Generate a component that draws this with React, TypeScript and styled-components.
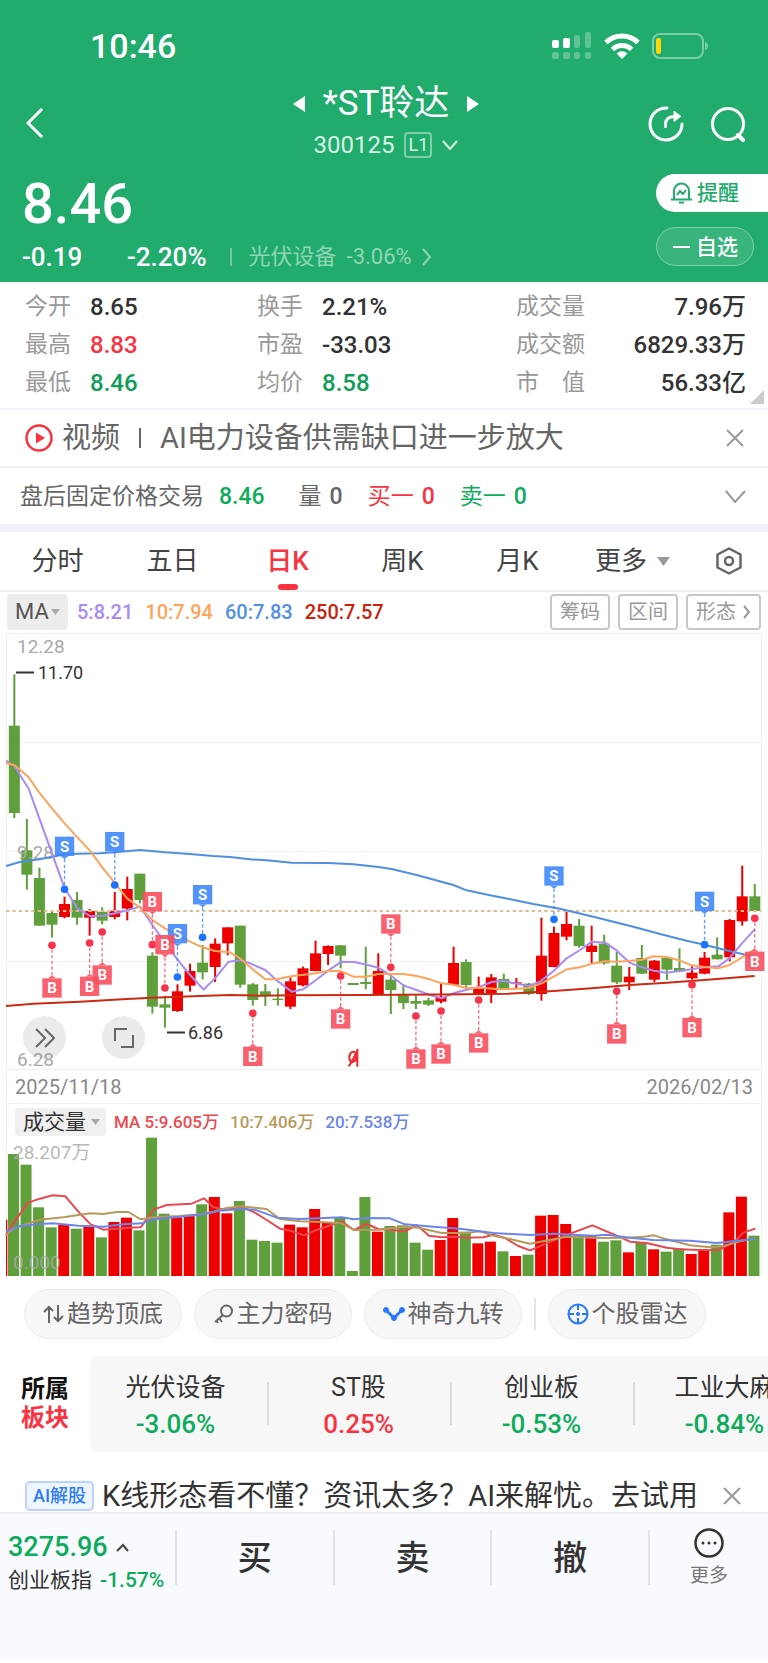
import React from "react";
import styled, { createGlobalStyle } from "styled-components";

const UP = "#f9333f";
const DOWN = "#0dab5c";
const FONT = `Roboto, "Noto Sans CJK SC", sans-serif`;

const Global = createGlobalStyle`
  * { box-sizing: border-box; }
  body { margin: 0; background: #fff; color: #333; font-family: ${FONT}; }
  button { font: inherit; color: inherit; border: 0; background: none; padding: 0; margin: 0; cursor: pointer; }
  a { color: inherit; text-decoration: none; }
  svg { display: block; flex: none; }
  h1, p, dl, dd, dt { margin: 0; font-weight: inherit; }
`;

const Page = styled.div`
  width: 100%;
  overflow: hidden;
`;

/* ---------- header ---------- */

const Header = styled.header`
  background: #21ab6d;
  color: #fff;
  padding: 28px 0 10px;
`;

const StatusBar = styled.div`
  display: flex;
  align-items: center;
  justify-content: space-between;
  padding: 0 59px 0 90px;
  font-size: 34px;
  font-weight: 500;
  line-height: 36px;
`;

const StatusIcons = styled.div`
  display: flex;
  align-items: center;
  gap: 12px;
`;

const NavBar = styled.nav`
  display: grid;
  grid-template-columns: 1fr auto 1fr;
  align-items: center;
  padding: 16px 22px 0 26px;
`;

const NavActions = styled.div`
  display: flex;
  justify-content: flex-end;
  align-items: center;
  gap: 26px;
  padding-top: 6px;
`;

const NavBack = styled.div`
  padding-top: 8px;
`;

const TitleBlock = styled.div`
  display: flex;
  flex-direction: column;
  align-items: center;
  gap: 2px;
  padding-top: 2px;
`;

const TitleLine = styled.div`
  display: flex;
  align-items: center;
  gap: 18px;
`;

const Title = styled.h1`
  font-size: 35px;
  line-height: 44px;
`;

const CodeLine = styled.div`
  display: flex;
  align-items: center;
  gap: 10px;
  font-size: 24px;
  line-height: 34px;
  color: #d8f2e6;
`;

const LevelTag = styled.span`
  border: 2px solid #7fcfaa;
  border-radius: 4px;
  width: 28px;
  line-height: 22px;
  text-align: center;
  font-size: 18px;
`;

const Quote = styled.section`
  display: flex;
  justify-content: space-between;
  margin-top: 12px;
  padding-left: 22px;
`;

const Price = styled.p`
  font-size: 56px;
  font-weight: 500;
  line-height: 60px;
`;

const ChangeLine = styled.div`
  display: flex;
  align-items: center;
  margin-top: 8px;
  font-size: 26px;
  font-weight: 500;
  line-height: 30px;
`;

const Change = styled.span`
  min-width: 105px;
`;

const HeadRule = styled.i`
  width: 2px;
  height: 18px;
  margin: 0 17px 0 23px;
  background: #6fc8a0;
`;

const SectorLink = styled.a`
  display: flex;
  align-items: center;
  gap: 10px;
  font-size: 22px;
  font-weight: 400;
  color: #8fd6b4;
`;

const QuoteActions = styled.div`
  display: flex;
  flex-direction: column;
  gap: 15px;
`;

const Remind = styled.button`
  display: flex;
  align-items: center;
  gap: 5px;
  width: 112px;
  height: 38px;
  padding-left: 15px;
  border-radius: 20px 0 0 20px;
  background: #fff;
  color: #21ab6d;
  font-size: 21px;
  font-weight: 500;
  line-height: 30px;
`;

const Favorite = styled.button`
  display: flex;
  align-items: center;
  gap: 6px;
  width: 98px;
  height: 39px;
  padding-left: 16px;
  border: 1px solid #7fcfaa;
  border-radius: 20px;
  background: #39b47d;
  color: #fff;
  font-size: 21px;
  font-weight: 500;
  line-height: 30px;
`;

/* ---------- figures and notices ---------- */

const Stats = styled.dl`
  position: relative;
  display: grid;
  grid-template-columns: 232px 1fr 230px;
  padding: 6px 22px 6px 25px;
  border-bottom: 2px solid #f2f3f6;
`;

const Stat = styled.div<{ $spread?: boolean }>`
  display: flex;
  justify-content: ${(p) => (p.$spread ? "space-between" : "flex-start")};
  gap: 19px;
  line-height: 38px;
`;

const StatLabel = styled.dt`
  font-size: 23px;
  color: #999;
  white-space: pre;
`;

const StatValue = styled.dd<{ $color?: string }>`
  font-size: 24px;
  font-weight: 500;
  color: ${(p) => p.$color || "#333"};
`;

const Corner = styled.i`
  position: absolute;
  right: 4px;
  bottom: 4px;
  border-style: solid;
  border-width: 0 0 14px 14px;
  border-color: transparent transparent #ccc transparent;
`;

const Notice = styled.section`
  display: flex;
  align-items: center;
  justify-content: space-between;
  padding: 10px 24px 10px 25px;
  border-bottom: 2px solid #f2f3f6;
`;

const NoticeLink = styled.a`
  display: flex;
  align-items: center;
  gap: 9px;
  font-size: 29px;
  line-height: 36px;
  color: #666;
  white-space: pre;
`;

const NoticeRule = styled.i`
  width: 2px;
  height: 20px;
  margin: 0 10px;
  background: #666;
`;

const AfterHours = styled.section`
  display: flex;
  align-items: center;
  padding: 11px 22px 9px 20px;
  font-size: 23px;
  line-height: 36px;
  color: #666;
  border-bottom: 8px solid #f1f2f7;
`;

const Field = styled.span<{ $color?: string; $gap: number }>`
  display: flex;
  gap: 8px;
  margin-left: ${(p) => p.$gap}px;
  color: ${(p) => p.$color || "#666"};
  b { font-weight: 500; }
`;

const EndButton = styled.button`
  margin-left: auto;
`;

/* ---------- period tabs ---------- */

const Tabs = styled.nav`
  display: flex;
  border-bottom: 2px solid #f0f0f1;
`;

const Tab = styled.button<{ $active?: boolean; $narrow?: boolean }>`
  position: relative;
  display: flex;
  align-items: center;
  justify-content: center;
  flex: ${(p) => (p.$narrow ? 78 : 115)} 1 0;
  gap: 10px;
  font-size: 26px;
  line-height: 58px;
  color: ${(p) => (p.$active ? UP : "#444")};
  font-weight: ${(p) => (p.$active ? 500 : 400)};
  &::after {
    content: "";
    display: ${(p) => (p.$active ? "block" : "none")};
    position: absolute;
    left: 50%;
    bottom: 0;
    width: 20px;
    height: 6px;
    margin-left: -10px;
    border-radius: 3px;
    background: ${UP};
  }
`;

/* ---------- chart ---------- */

const MaRow = styled.div`
  display: flex;
  align-items: center;
  gap: 9px;
  padding: 2px 7px 3px;
  font-size: 20px;
  line-height: 36px;
`;

const MaPicker = styled.button`
  display: flex;
  align-items: center;
  justify-content: center;
  gap: 2px;
  width: 61px;
  height: 36px;
  border-radius: 4px;
  background: #ededed;
  color: #555;
  font-size: 22px;
`;

const MaValue = styled.span<{ $color: string }>`
  color: ${(p) => p.$color};
  font-weight: 500;
  margin-right: 3px;
`;

const ToolGroup = styled.div`
  display: flex;
  gap: 8px;
  margin-left: auto;
`;

const ToolButton = styled.button`
  display: flex;
  align-items: center;
  gap: 7px;
  height: 36px;
  padding: 0 8px;
  border: 2px solid #c8c8c8;
  border-radius: 4px;
  color: #999;
  font-size: 20px;
`;

const ChartArea = styled.div`
  position: relative;
  svg.plot { width: 100%; height: auto; }
`;

const ChartButtons = styled.div`
  position: absolute;
  left: 23px;
  bottom: 11px;
  display: flex;
  gap: 36px;
`;

const RoundButton = styled.button`
  display: flex;
  align-items: center;
  justify-content: center;
  width: 43px;
  height: 43px;
  border-radius: 50%;
  background: rgba(120, 120, 120, 0.15);
`;

const DateRow = styled.div`
  display: flex;
  justify-content: space-between;
  margin: 0 6px;
  padding: 1px 8px 0;
  border: 1px solid #f0f0f0;
  border-top: 0;
  font-size: 20px;
  line-height: 32px;
  color: #888;
`;

const VolumeHead = styled.div`
  display: flex;
  align-items: center;
  gap: 8px;
  margin: 0 6px;
  padding: 4px 8px 1px;
  border-left: 1px solid #f0f0f0;
  border-right: 1px solid #f0f0f0;
  font-size: 17px;
  line-height: 28px;
`;

const VolumePicker = styled.button`
  display: flex;
  align-items: center;
  gap: 5px;
  padding: 0 6px 0 8px;
  border-radius: 4px;
  background: #f0f0f0;
  color: #333;
  font-size: 21px;
`;

/* ---------- below the chart ---------- */

const PillRow = styled.div`
  display: flex;
  align-items: center;
  gap: 12px;
  padding: 13px 24px 17px;
`;

const Pill = styled.button`
  display: flex;
  align-items: center;
  justify-content: center;
  gap: 3px;
  width: 158px;
  height: 50px;
  border: 1px solid #ececec;
  border-radius: 25px;
  background: #f7f7f7;
  color: #666;
  font-size: 24px;
  line-height: 36px;
`;

const PillRule = styled.i`
  width: 2px;
  height: 32px;
  background: #e6e6e6;
`;

const Sectors = styled.section`
  display: flex;
  align-items: center;
`;

const SectorsTitle = styled.div`
  flex: none;
  width: 90px;
  padding-left: 21px;
  font-size: 24px;
  font-weight: 700;
  line-height: 29px;
  color: #111;
  em { display: block; font-style: normal; color: ${UP}; }
`;

const SectorStrip = styled.div`
  display: flex;
  flex: 1;
  overflow: hidden;
  padding: 13px 0 9px;
  border-radius: 8px 0 0 8px;
  background: #f7f7f7;
  & > * + *::before {
    content: "";
    position: absolute;
    left: -6px;
    top: 13px;
    width: 2px;
    height: 43px;
    background: #dcdcdc;
  }
`;

const Sector = styled.a`
  position: relative;
  flex: none;
  width: 183px;
  padding-right: 12px;
  display: flex;
  flex-direction: column;
  align-items: center;
  font-size: 25px;
  line-height: 37px;
  color: #333;
`;

const Percent = styled.span<{ $color: string }>`
  font-size: 26px;
  font-weight: 500;
  color: ${(p) => p.$color};
`;

const AiRow = styled.section`
  display: flex;
  align-items: center;
  justify-content: space-between;
  height: 60px;
  padding: 28px 27px 0 25px;
`;

const AiLink = styled.a`
  display: flex;
  align-items: center;
  gap: 8px;
  font-size: 29px;
  line-height: 34px;
  white-space: nowrap;
`;

const AiTag = styled.span`
  padding: 0 6px;
  border: 2px solid #bcd4fb;
  border-radius: 5px;
  background: #eff5ff;
  color: #2e7bf6;
  font-size: 18px;
  font-weight: 500;
  line-height: 26px;
`;

const BottomBar = styled.footer`
  display: flex;
  padding: 16px 0 64px;
  border-top: 2px solid #eeeff2;
  background: #f9fafd;
`;

const IndexLink = styled.a`
  display: flex;
  flex-direction: column;
  width: 175px;
  padding-left: 8px;
  font-size: 21px;
  line-height: 32px;
  white-space: nowrap;
`;

const IndexValue = styled.span`
  display: flex;
  align-items: center;
  gap: 8px;
  color: ${DOWN};
  font-size: 27px;
  font-weight: 500;
  line-height: 34px;
`;

const IndexChange = styled.span`
  margin-left: 8px;
  color: ${DOWN};
  font-weight: 500;
`;

const Trade = styled.button`
  flex: 1;
  height: 55px;
  border-left: 2px solid #e2e3e6;
  font-size: 34px;
  font-weight: 500;
  line-height: 52px;
`;

const More = styled.button`
  display: flex;
  flex-direction: column;
  align-items: center;
  justify-content: center;
  gap: 7px;
  width: 120px;
  height: 55px;
  border-left: 2px solid #e2e3e6;
  color: #777;
  font-size: 19px;
  line-height: 22px;
`;

/* ---------- data (plot units are thirds of a pixel) ---------- */

type Candle = [number, number, number, number, "r" | "g", number];

// high, body top, body bottom, low, colour, volume top
const CANDLES: Candle[] = [
  [133, 287, 549, 564, "g", 252], [567, 661, 734, 779, "g", 284], [713, 744, 887, 887, "g", 412],
  [845, 849, 884, 923, "g", 472], [800, 822, 861, 865, "r", 465], [786, 810, 863, 884, "g", 476],
  [837, 843, 863, 917, "r", 471], [832, 845, 872, 883, "g", 502], [786, 842, 861, 868, "r", 456],
  [740, 777, 836, 871, "r", 443], [731, 731, 810, 820, "g", 481], [967, 977, 1130, 1151, "g", 203],
  [1097, 1123, 1133, 1193, "g", 431], [1063, 1084, 1143, 1146, "r", 442], [1001, 1023, 1067, 1085, "r", 438],
  [945, 998, 1027, 1048, "g", 403], [925, 941, 1011, 1056, "r", 381], [892, 892, 940, 976, "r", 430],
  [887, 887, 1064, 1073, "g", 393], [1059, 1063, 1110, 1127, "g", 509], [1062, 1084, 1097, 1128, "g", 513],
  [1075, 1106, 1110, 1127, "g", 518], [1043, 1054, 1130, 1137, "r", 464], [1010, 1015, 1066, 1069, "r", 472],
  [932, 970, 1023, 1024, "r", 417], [946, 948, 972, 1005, "r", 458], [945, 946, 977, 1015, "g", 441],
  [1059, 1059, 1065, 1065, "g", 603], [950, 1056, 1062, 1078, "g", 381], [970, 1023, 1095, 1096, "r", 485],
  [1040, 1049, 1080, 1152, "g", 468], [1062, 1095, 1119, 1137, "g", 466], [1093, 1113, 1121, 1137, "g", 518],
  [1103, 1111, 1124, 1128, "g", 539], [1060, 1100, 1115, 1120, "r", 510], [950, 999, 1064, 1065, "r", 444],
  [988, 996, 1065, 1073, "g", 485], [1040, 1075, 1092, 1095, "r", 520], [1032, 1042, 1092, 1119, "r", 515],
  [1031, 1047, 1078, 1080, "g", 544], [1044, 1057, 1061, 1077, "r", 558], [1059, 1061, 1092, 1095, "g", 554],
  [863, 977, 1092, 1112, "r", 437], [890, 909, 1011, 1012, "r", 435], [846, 882, 920, 931, "r", 462],
  [867, 887, 948, 953, "g", 496], [887, 947, 966, 1001, "r", 497], [914, 941, 1000, 1004, "g", 515],
  [966, 1007, 1057, 1062, "g", 511], [1011, 1040, 1057, 1080, "r", 547], [945, 984, 1031, 1032, "g", 517],
  [990, 992, 1049, 1056, "r", 538], [982, 984, 1019, 1050, "g", 545], [955, 1014, 1024, 1026, "g", 535],
  [1009, 1028, 1045, 1049, "r", 552], [966, 983, 1031, 1033, "r", 538], [922, 974, 988, 988, "g", 524],
  [867, 870, 982, 994, "r", 427], [707, 799, 874, 887, "r", 380], [762, 799, 843, 845, "g", 497],
];

const TONE = { r: "#ee0000", g: "#5f9f3c" };
const STEP = 37.65;
const candleX = (i: number) => 43 + STEP * i;

const PRICE_LINES = [
  { color: "#4f8fe0", points: "18,708 60,696 118,688 200,672 300,670 345,667 420,660 495,667 570,672 640,678 690,681 750,688 800,691 875,698 985,699 1060,703 1135,711 1175,717 1250,735 1360,765 1400,781 1470,796 1524,806 1600,822 1680,836 1780,860 1900,890 1980,912 2060,932 2113,944 2200,966 2264,980" },
  { color: "#a88bf5", points: "18,392 43,408 86,476 118,565 156,670 194,775 232,835 270,858 310,857 345,850 382,841 420,830 457,885 495,938 532,988 570,1035 611,1079 645,1045 686,995 720,991 750,1000 796,1020 835,1055 875,1085 909,1078 948,1050 985,1022 1024,995 1062,996 1100,1004 1135,1013 1170,1035 1210,1066 1250,1080 1290,1095 1325,1105 1360,1090 1400,1079 1440,1070 1475,1056 1510,1052 1535,1058 1586,1068 1620,1055 1661,1023 1700,985 1740,960 1776,935 1815,938 1851,962 1887,997 1925,1012 1962,1022 2000,1028 2038,1023 2075,1018 2113,1012 2155,1009 2188,985 2226,940 2264,898" },
  { color: "#fda35c", points: "18,400 43,405 86,442 118,488 156,535 194,580 232,622 270,662 307,712 345,760 382,806 420,833 457,870 495,895 532,915 570,935 608,952 645,963 690,967 720,985 758,1018 796,1048 833,1047 873,1039 911,1034 948,1030 985,1022 1024,1024 1060,1040 1098,1040 1135,1032 1210,1032 1250,1038 1290,1048 1325,1060 1360,1064 1398,1074 1440,1073 1500,1078 1548,1076 1586,1074 1625,1060 1661,1040 1700,1018 1740,1012 1776,1001 1815,994 1851,995 1887,993 1925,989 1962,979 2000,981 2038,991 2075,1006 2113,1011 2155,1015 2188,1005 2226,982 2264,958" },
  { color: "#cb2b12", points: "18,1128 100,1121 240,1115 380,1107 457,1103 600,1098 690,1095 780,1097 875,1096 1100,1095 1200,1094 1400,1093 1524,1091 1661,1083 1775,1075 1890,1065 2000,1058 2113,1050 2264,1038" },
];

const VOLUME_LINES = [
  { color: "#e8484e", points: "18,495 40,460 84,398 120,386 158,376 196,379 235,425 272,463 310,479 350,476 385,473 422,472 462,418 500,405 575,401 612,385 640,412 680,420 720,409 765,428 800,450 840,476 870,482 912,496 945,482 985,468 1025,454 1062,480 1100,462 1135,477 1170,479 1215,484 1250,465 1287,497 1325,502 1365,500 1400,503 1450,502 1480,494 1515,504 1555,528 1590,541 1660,512 1700,495 1777,466 1850,497 1890,515 1940,519 2000,533 2040,538 2113,541 2155,540 2200,518 2230,488 2266,476" },
  { color: "#b8995c", points: "18,495 40,476 84,460 120,449 196,441 270,430 310,432 350,426 385,426 422,448 462,442 540,438 610,432 640,425 680,414 720,409 765,413 800,417 840,447 900,454 945,455 1025,460 1062,480 1135,479 1215,470 1255,473 1325,489 1400,489 1440,484 1480,497 1530,507 1590,521 1660,508 1700,500 1800,504 1880,503 1930,500 1962,496 2000,508 2070,526 2130,532 2170,528 2220,514 2266,505" },
  { color: "#6b86e8", points: "18,485 60,468 110,463 158,460 235,467 310,470 370,463 425,460 460,448 540,440 610,433 660,422 720,417 765,419 830,443 900,447 1025,442 1062,448 1100,444 1170,445 1215,463 1300,470 1380,476 1480,489 1590,495 1660,491 1780,497 1820,494 1890,503 1960,510 2070,512 2150,519 2200,514 2266,506" },
];

// candle index, side, top of the flag, centre of the dot
const TRADES: [number, "S" | "B", number, number][] = [
  [4, "S", 620, 778], [8, "S", 606, 765], [3, "B", 1045, 946], [7, "B", 1006, 906], [6, "B", 1040, 939],
  [11, "B", 786, 944], [13, "S", 882, 1041], [12, "B", 915, 1074], [15, "S", 765, 922], [19, "B", 1250, 1150],
  [26, "B", 1138, 1038], [30, "B", 853, 1012], [32, "B", 1258, 1158], [34, "B", 1243, 1143],
  [37, "B", 1210, 1110], [43, "S", 709, 868], [48, "B", 1183, 1084], [54, "B", 1164, 1064],
  [55, "S", 785, 944], [59, "B", 965, 865],
];

/* ---------- drawings ---------- */

function Chevron({ d, w, h, color, sw = 2 }: { d: string; w: number; h: number; color: string; sw?: number }) {
  return (
    <svg width={w} height={h} viewBox={`0 0 ${w} ${h}`} fill="none" stroke={color} strokeWidth={sw} aria-hidden="true">
      <path d={d} />
    </svg>
  );
}

function Caret({ w, h, color }: { w: number; h: number; color: string }) {
  return (
    <svg width={w} height={h} viewBox="0 0 12 9" preserveAspectRatio="none" fill={color} aria-hidden="true">
      <path d="M0 0h12L6 9z" />
    </svg>
  );
}

function Cross() {
  return <Chevron w={18} h={18} d="M1 1l16 16M17 1L1 17" color="#999" />;
}

function StatusGlyphs() {
  return (
    <StatusIcons>
      <svg width="40" height="28" viewBox="0 0 40 28" fill="#fff" aria-hidden="true">
        <rect x="0" y="8" width="7" height="8" rx="2" />
        <rect x="11" y="6" width="7" height="10" rx="2" />
        <g opacity=".28">
          <rect x="22" y="3" width="6" height="13" rx="2" />
          <rect x="33" y="0" width="6" height="16" rx="2" />
          <rect x="0" y="20" width="7" height="7" rx="2" />
          <rect x="11" y="20" width="7" height="7" rx="2" />
          <rect x="22" y="20" width="6" height="7" rx="2" />
          <rect x="33" y="20" width="6" height="7" rx="2" />
        </g>
      </svg>
      <svg width="36" height="26" viewBox="0 0 36 26" aria-hidden="true">
        <g fill="none" stroke="#fff" strokeWidth="5">
          <path d="M2 9.5a23 23 0 0 1 32 0" />
          <path d="M8.500 16.500a13.500 13.500 0 0 1 19 0" />
        </g>
        <path d="M18 26l-5.500-5.500a8 8 0 0 1 11 0z" fill="#fff" />
      </svg>
      <svg width="57" height="26" viewBox="0 0 57 26" aria-hidden="true">
        <rect x="1" y="1" width="50" height="24" rx="7" fill="none" stroke="#7dcca7" strokeWidth="2" />
        <rect x="4" y="5" width="5" height="16" rx="2" fill="#ffd60a" />
        <path d="M53 9c4 1 4 7 0 8z" fill="#7dcca7" />
      </svg>
    </StatusIcons>
  );
}

function PriceChart() {
  return (
    <svg className="plot" viewBox="0 3 768 437" role="img" aria-label="日K线图">
      <g stroke="#f0f0f0" strokeWidth="1" fill="none">
        <path d="M6 3.500H761M6 112.500H761M6 221.500H761M6 331.500H761M6 439.500H761M6.500 3V440M761.500 3V440" />
      </g>
      <g transform="scale(0.33333)">
        {CANDLES.map(([high, top, bottom, low, tone], i) => (
          <g key={i} fill={TONE[tone]}>
            <rect x={candleX(i) - 3} y={high} width="6" height={low - high} />
            <rect x={candleX(i) - 16.5} y={top} width="33" height={bottom - top} />
          </g>
        ))}
        <path d="M18 843H2284" stroke="#dfbd92" strokeWidth="6" strokeDasharray="10 9" />
      </g>
      <g fontSize="19" fill="#aaa">
        <text x="17" y="23">12.28</text>
        <text x="17" y="229">9.28</text>
        <text x="17" y="436">6.28</text>
      </g>
      <g transform="scale(0.33333)">
        {PRICE_LINES.map((l) => (
          <polyline key={l.color} points={l.points} fill="none" stroke={l.color} strokeWidth="6" strokeLinejoin="round" />
        ))}
        {TRADES.map(([i, side, flag, dot]) => {
          const x = candleX(i);
          const above = flag < dot;
          const solid = side === "S" ? "#1f74ff" : "#f6334a";
          const soft = side === "S" ? "#3f88fb" : "#f8505f";
          const tip = above ? flag + 58 : flag;
          const dir = above ? 9 : -9;
          return (
            <g key={i}>
              <path d={`M${x} ${tip + dir}V${dot}`} stroke={solid} strokeOpacity=".7" strokeWidth="4" strokeDasharray="10 7" />
              <circle cx={x} cy={dot} r="11.500" fill={solid} />
              <g fill={soft} fillOpacity=".9">
                <rect x={x - 29} y={flag} width="58" height="58" />
                <path d={`M${x - 12} ${tip}h24l-12 ${dir}z`} />
              </g>
              <text x={x} y={flag + 45} textAnchor="middle" fontSize="45" fontWeight="700" fill="#fff">
                {side}
              </text>
            </g>
          );
        })}
        <g fill="none" stroke="#ee2a30" strokeWidth="6">
          <path d="M1046 1309l8-12 20-40" />
          <path d="M1070 1270q-12-10-20 2-5 12 2 24 8 4 14-8l6-24v46" />
          <path d="M1056 1292h16" />
        </g>
      </g>
      <path d="M16 42.500H34M167 402.500H185" stroke="#333" strokeWidth="2" />
      <g fontSize="18" fill="#333">
        <text x="38" y="49">11.70</text>
        <text x="188" y="409">6.86</text>
      </g>
    </svg>
  );
}

function VolumeChart() {
  return (
    <svg className="plot" viewBox="0 67 768 139" role="img" aria-label="成交量图">
      <path d="M6.500 67V206M761.500 67V206" stroke="#f0f0f0" />
      <g transform="scale(0.33333)">
        <rect x="18" y="449" width="4" height="169" fill={TONE.r} />
        {CANDLES.map(([, , , , tone, top], i) => (
          <rect key={i} x={candleX(i) - 19} y={top} width="33" height={618 - top} fill={TONE[tone]} />
        ))}
      </g>
      <g fontSize="19" fill="#aaa" fillOpacity=".85">
        <text x="13" y="89">28.207万</text>
        <text x="13" y="199">0.000</text>
      </g>
      <g transform="scale(0.33333)" fill="none" strokeWidth="6" strokeLinejoin="round">
        {VOLUME_LINES.map((l) => (
          <polyline key={l.color} points={l.points} stroke={l.color} />
        ))}
      </g>
    </svg>
  );
}

const STATS: { label: string; value: string; color?: string }[] = [
  { label: "今开", value: "8.65" },
  { label: "换手", value: "2.21%" },
  { label: "成交量", value: "7.96万" },
  { label: "最高", value: "8.83", color: UP },
  { label: "市盈", value: "-33.03" },
  { label: "成交额", value: "6829.33万" },
  { label: "最低", value: "8.46", color: "#0f9d58" },
  { label: "均价", value: "8.58", color: "#0f9d58" },
  { label: "市　值", value: "56.33亿" },
];

const SECTORS = [
  { name: "光伏设备", pct: "-3.06%", color: DOWN },
  { name: "ST股", pct: "0.25%", color: UP },
  { name: "创业板", pct: "-0.53%", color: DOWN },
  { name: "工业大麻", pct: "-0.84%", color: DOWN },
];

export default function App() {
  return (
    <Page>
      <Global />
      <Header>
        <StatusBar>
          <span>10:46</span>
          <StatusGlyphs />
        </StatusBar>
        <NavBar>
          <NavBack>
            <button aria-label="返回">
              <Chevron w={18} h={30} d="M16 1L2 15l14 14" color="#fff" sw={3} />
            </button>
          </NavBack>
          <TitleBlock>
            <TitleLine>
              <button aria-label="上一只">
                <svg width="12" height="16" viewBox="0 0 12 16" fill="#fff"><path d="M12 0v16L0 8z" /></svg>
              </button>
              <Title>*ST聆达</Title>
              <button aria-label="下一只">
                <svg width="12" height="16" viewBox="0 0 12 16" fill="#fff"><path d="M0 0v16l12-8z" /></svg>
              </button>
            </TitleLine>
            <CodeLine>
              <span>300125</span>
              <LevelTag>L1</LevelTag>
              <Chevron w={16} h={10} d="M1 1l7 8 7-8" color="#d8f2e6" />
            </CodeLine>
          </TitleBlock>
          <NavActions>
            <button aria-label="分享">
              <svg width="36" height="36" viewBox="0 0 36 36" fill="none" stroke="#fff" strokeWidth="3" strokeLinecap="round">
                <path d="M19 2A16 16 0 1 0 34 18" />
                <path d="M17.500 20.500v-2Q17.500 11 26 10.500" />
                <path d="M26 5.500v10l6.500-5z" fill="#fff" strokeWidth="1" strokeLinejoin="round" />
              </svg>
            </button>
            <button aria-label="搜索">
              <svg width="36" height="36" viewBox="0 0 36 36" fill="none" stroke="#fff" strokeWidth="3" strokeLinecap="round">
                <circle cx="18" cy="18" r="15.500" />
                <path d="M28 29l5 5" strokeWidth="4" />
              </svg>
            </button>
          </NavActions>
        </NavBar>
        <Quote>
          <div>
            <Price>8.46</Price>
            <ChangeLine>
              <Change>-0.19</Change>
              <span>-2.20%</span>
              <HeadRule />
              <SectorLink href="#sector">
                <span>光伏设备</span>
                <span>-3.06%</span>
                <Chevron w={10} h={18} d="M1 1l7 8-7 8" color="#8fd6b4" />
              </SectorLink>
            </ChangeLine>
          </div>
          <QuoteActions>
            <Remind>
              <svg width="21" height="22" viewBox="0 0 21 22" fill="none" stroke="#21ab6d" strokeWidth="2">
                <path d="M3 17V9a7.500 7.500 0 0 1 15 0v8M0 17.500h21M8 20.500h5M6 13l3-4 3 3 3-4" />
              </svg>
              提醒
            </Remind>
            <Favorite>
              <Chevron w={17} h={2} d="M0 1h17" color="#fff" />
              自选
            </Favorite>
          </QuoteActions>
        </Quote>
      </Header>

      <Stats>
        {STATS.map((s, i) => (
          <Stat key={s.label} $spread={i % 3 === 2}>
            <StatLabel>{s.label}</StatLabel>
            <StatValue $color={s.color}>{s.value}</StatValue>
          </Stat>
        ))}
        <Corner />
      </Stats>

      <Notice>
        <NoticeLink href="#video">
          <svg width="28" height="28" viewBox="0 0 28 28" aria-hidden="true">
            <circle cx="14" cy="14" r="12.500" fill="none" stroke={UP} strokeWidth="2.500" />
            <path d="M11 8.500l9 5.500-9 5.500z" fill={UP} />
          </svg>
          视频
          <NoticeRule />
          AI电力设备供需缺口进一步放大
        </NoticeLink>
        <button aria-label="关闭"><Cross /></button>
      </Notice>

      <AfterHours>
        盘后固定价格交易
        <Field $gap={15} $color={DOWN}><b>8.46</b></Field>
        <Field $gap={34}>量 <b>0</b></Field>
        <Field $gap={25} $color={UP}>买一 <b>0</b></Field>
        <Field $gap={25} $color={DOWN}>卖一 <b>0</b></Field>
        <EndButton aria-label="展开">
          <Chevron w={21} h={14} d="M1 1l9 11 10-11" color="#999" />
        </EndButton>
      </AfterHours>

      <Tabs>
        <Tab>分时</Tab>
        <Tab>五日</Tab>
        <Tab $active>日K</Tab>
        <Tab>周K</Tab>
        <Tab>月K</Tab>
        <Tab>更多 <Caret w={13} h={9} color="#999" /></Tab>
        <Tab $narrow aria-label="设置">
          <svg width="28" height="28" viewBox="0 0 28 28" fill="none" stroke="#666" strokeWidth="2.500" strokeLinejoin="round">
            <path d="M14 1.500l11.500 6v13L14 26.500l-11.500-6v-13z" />
            <circle cx="14" cy="14" r="4" />
          </svg>
        </Tab>
      </Tabs>

      <MaRow>
        <MaPicker>MA<Caret w={9} h={6} color="#aaa" /></MaPicker>
        <MaValue $color="#a88bf5">5:8.21</MaValue>
        <MaValue $color="#fda35c">10:7.94</MaValue>
        <MaValue $color="#4f8fe8">60:7.83</MaValue>
        <MaValue $color="#cb1f0c">250:7.57</MaValue>
        <ToolGroup>
          <ToolButton>筹码</ToolButton>
          <ToolButton>区间</ToolButton>
          <ToolButton>形态<Chevron w={8} h={14} d="M1 1l5 6-5 6" color="#999" /></ToolButton>
        </ToolGroup>
      </MaRow>

      <ChartArea>
        <PriceChart />
        <ChartButtons>
          <RoundButton aria-label="快进">
            <Chevron w={20} h={20} d="M1 1l9 9-9 9M10 1l9 9-9 9" color="#666" />
          </RoundButton>
          <RoundButton aria-label="全屏">
            <Chevron w={20} h={20} d="M1 13V1h12M19 7v12H7" color="#666" />
          </RoundButton>
        </ChartButtons>
      </ChartArea>
      <DateRow>
        <span>2025/11/18</span>
        <span>2026/02/13</span>
      </DateRow>
      <VolumeHead>
        <VolumePicker>成交量<Caret w={9} h={6} color="#aaa" /></VolumePicker>
        <MaValue $color="#ee4850">MA 5:9.605万</MaValue>
        <MaValue $color="#b8995c">10:7.406万</MaValue>
        <MaValue $color="#6b86e8">20:7.538万</MaValue>
      </VolumeHead>
      <ChartArea>
        <VolumeChart />
      </ChartArea>

      <PillRow>
        <Pill>
          <svg width="21" height="18" viewBox="0 0 21 18" fill="none" stroke="#666" strokeWidth="2">
            <path d="M6 18V2M1 7l5-5 4 4M15 0v16M20 11l-5 5-4-4" />
          </svg>
          趋势顶底
        </Pill>
        <Pill>
          <svg width="20" height="20" viewBox="0 0 20 20" fill="none" stroke="#666" strokeWidth="2">
            <circle cx="12.500" cy="7" r="5.500" />
            <path d="M9 11l-8 7M5 14l3 4M2 16l2 3" />
          </svg>
          主力密码
        </Pill>
        <Pill>
          <svg width="22" height="16" viewBox="0 0 22 16" fill="#2878ff" stroke="#2878ff">
            <path d="M3 4l8 8 8-8" fill="none" strokeWidth="3" />
            <circle cx="3" cy="4" r="2.500" /><circle cx="11" cy="12" r="2.500" /><circle cx="19" cy="4" r="2.500" />
          </svg>
          神奇九转
        </Pill>
        <PillRule />
        <Pill>
          <svg width="22" height="22" viewBox="0 0 22 22" fill="none" stroke="#2878ff" strokeWidth="2">
            <circle cx="11" cy="11" r="9.500" />
            <path d="M11 1v6M11 15v6M1 11h6M15 11h6" />
            <circle cx="11" cy="11" r="1" fill="#2878ff" />
          </svg>
          个股雷达
        </Pill>
      </PillRow>

      <Sectors>
        <SectorsTitle>所属<em>板块</em></SectorsTitle>
        <SectorStrip>
          {SECTORS.map((s) => (
            <Sector key={s.name} href="#sector">
              <span>{s.name}</span>
              <Percent $color={s.color}>{s.pct}</Percent>
            </Sector>
          ))}
        </SectorStrip>
      </Sectors>

      <AiRow>
        <AiLink href="#ai">
          <AiTag>AI解股</AiTag>
          K线形态看不懂？资讯太多？AI来解忧。去试用
        </AiLink>
        <button aria-label="关闭"><Cross /></button>
      </AiRow>

      <BottomBar>
        <IndexLink href="#index">
          <IndexValue>
            3275.96
            <Chevron w={13} h={9} d="M1 8l6-6 5 6" color="#444" />
          </IndexValue>
          <span>创业板指<IndexChange>-1.57%</IndexChange></span>
        </IndexLink>
        <Trade>买</Trade>
        <Trade>卖</Trade>
        <Trade>撤</Trade>
        <More>
          <svg width="30" height="30" viewBox="0 0 30 30" fill="#333" aria-hidden="true">
            <circle cx="15" cy="15" r="13.500" fill="none" stroke="#333" strokeWidth="2.500" />
            <circle cx="9" cy="15" r="1.500" /><circle cx="15" cy="15" r="1.500" /><circle cx="21" cy="15" r="1.500" />
          </svg>
          更多
        </More>
      </BottomBar>
    </Page>
  );
}
